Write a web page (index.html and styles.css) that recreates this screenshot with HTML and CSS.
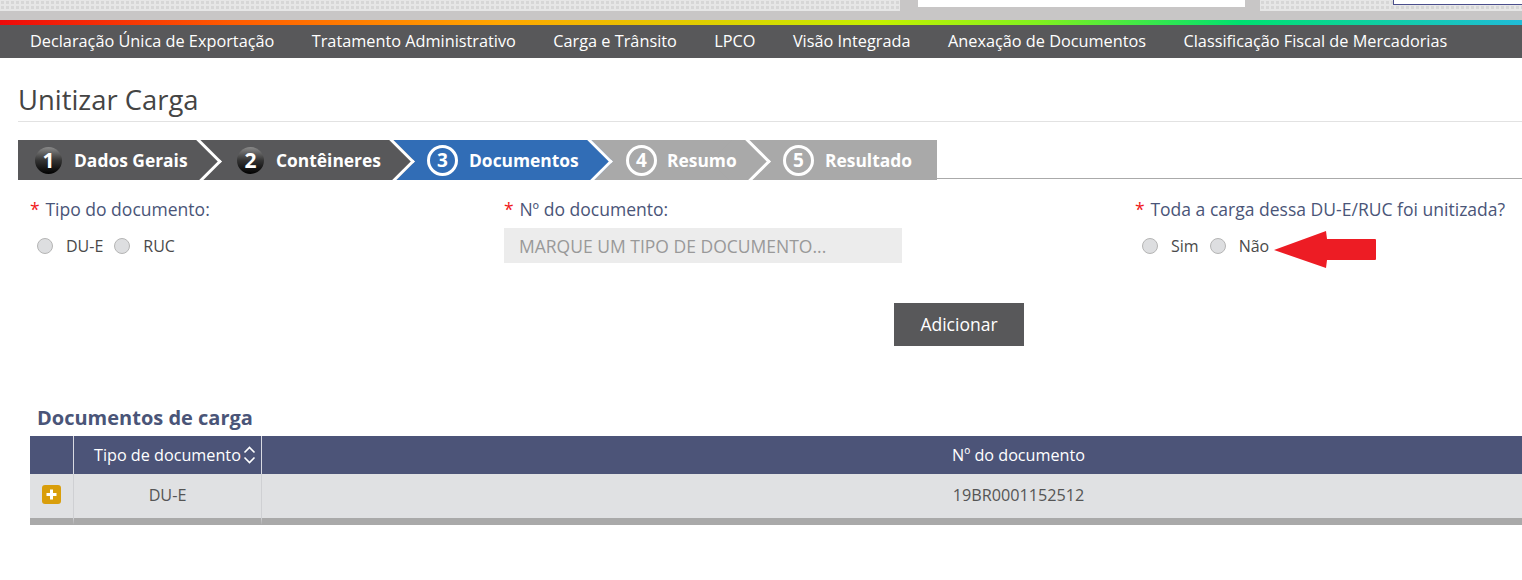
FILE: index.html
```html
<!DOCTYPE html>
<html lang="pt">
<head>
<meta charset="utf-8">
<title>Unitizar Carga</title>
<link rel="stylesheet" href="styles.css">
</head>
<body>
<header class="top">
  <div class="top-band">
    <div class="dots dots-left"></div>
    <div class="white-box"></div>
    <div class="dots dots-right"><div class="outlined"></div></div>
  </div>
  <div class="rainbow"></div>
  <nav class="menu">
    <a>Declaração Única de Exportação</a>
    <a>Tratamento Administrativo</a>
    <a>Carga e Trânsito</a>
    <a>LPCO</a>
    <a>Visão Integrada</a>
    <a>Anexação de Documentos</a>
    <a>Classificação Fiscal de Mercadorias</a>
  </nav>
</header>
<main class="page">
  <h1 class="title">Unitizar Carga</h1>
  <div class="steps">
    <div class="step step-done step-1"><span class="num num-dark">1</span><span class="lbl">Dados Gerais</span></div>
    <div class="step step-done step-2"><span class="num num-dark">2</span><span class="lbl">Contêineres</span></div>
    <div class="step step-active step-3"><span class="num">3</span><span class="lbl">Documentos</span></div>
    <div class="step step-todo step-4"><span class="num">4</span><span class="lbl">Resumo</span></div>
    <div class="step step-todo step-5"><span class="num">5</span><span class="lbl">Resultado</span></div>
    <div class="steps-line"></div>
  </div>
  <div class="form">
    <div class="field field-a">
      <div class="label"><span class="req">*</span>Tipo do documento:</div>
      <div class="radios">
        <span class="radio"></span><span class="opt">DU-E</span>
        <span class="radio"></span><span class="opt">RUC</span>
      </div>
    </div>
    <div class="field field-b">
      <div class="label"><span class="req">*</span>Nº do documento:</div>
      <div class="input">MARQUE UM TIPO DE DOCUMENTO...</div>
    </div>
    <div class="field field-c">
      <div class="label"><span class="req">*</span>Toda a carga dessa DU-E/RUC foi unitizada?</div>
      <div class="radios">
        <span class="radio"></span><span class="opt">Sim</span>
        <span class="radio"></span><span class="opt">Não</span>
      </div>
      <svg class="arrow" width="104" height="38" viewBox="0 0 104 38"><path d="M0 19 L52 0 L53 8 L101 8 Q102 8 102 9 L102 28 Q102 29 101 29 L53 29 L52 37 Z" fill="#ed1c24"/></svg>
    </div>
  </div>
  <div class="actions"><button class="btn" type="button">Adicionar</button></div>
  <h2 class="sub">Documentos de carga</h2>
  <table class="grid">
    <thead>
      <tr>
        <th class="c1"></th>
        <th class="c2"><span class="sort-wrap">Tipo de documento<svg class="sort" width="13" height="18" viewBox="0 0 13 18"><path d="M1.5 6.5 L6.5 1.5 L11.5 6.5 M1.5 11.5 L6.5 16.5 L11.5 11.5" fill="none" stroke="#fff" stroke-width="1.6"/></svg></span></th>
        <th class="c3">Nº do documento</th>
      </tr>
    </thead>
    <tbody>
      <tr>
        <td class="c1"><span class="plus"><svg width="19" height="19" viewBox="0 0 19 19"><path d="M9.5 4.5 V14.5 M4.5 9.5 H14.5" stroke="#fff" stroke-width="3"/></svg></span></td>
        <td class="c2">DU-E</td>
        <td class="c3">19BR0001152512</td>
      </tr>
    </tbody>
  </table>
</main>
</body>
</html>
```
FILE: styles.css
```css
* { box-sizing: border-box; }
html, body { margin: 0; padding: 0; }
body { width: 1522px; height: 580px; overflow: hidden; background: #fff; font-family: "Open Sans", sans-serif; color: #4a4a4a; }

.top-band { height: 20px; background: #c8c6c6; display: flex; align-items: flex-start; }
.dots { height: 11px; background-color: #e6e6e6; background-image: radial-gradient(#d6d6d6 1.5px, transparent 2px); background-size: 5px 5px; }
.dots-left { width: 900px; }
.white-box { width: 327px; height: 7px; margin-left: 18px; background: #fff; }
.dots-right { flex: 1; margin-left: 15px; position: relative; }
.outlined { position: absolute; left: 133px; right: 0; top: 0; height: 5px; border: 1px solid #4a4f8c; border-width: 0 0 1px 1px; background: #fff; }
.rainbow { height: 5px; background: linear-gradient(90deg, #ee0a0a 0, #ff5a00 230px, #ffa600 500px, #c4f000 880px, #80f020 1040px, #00e070 1240px, #20bcd8 1522px); }
.menu { height: 33px; background: #58585a; display: flex; align-items: center; padding: 0 0 2px 30px; gap: 37.4px; }
.menu a { color: #fff; font-size: 16.3px; white-space: nowrap; }

.page { padding-left: 18px; }
.title { margin: 0; height: 64px; padding-top: 22px; border-bottom: 1px solid #e2e2e2; font-size: 27.4px; font-weight: 400; line-height: 40px; color: #444; }

.steps { margin-top: 18px; height: 40px; display: flex; overflow: hidden; }
.step { height: 40px; flex: none; display: flex; align-items: center; position: relative; color: #fff; font-weight: 700; font-size: 17.4px; }
.step::after { content: ""; position: absolute; top: 0; right: -13.2px; width: 40px; height: 40px; transform: rotate(45deg); border-top: 3px solid #fff; border-right: 3px solid #fff; background: inherit; }
.step > span { position: relative; z-index: 1; }
.step-done { background: #58585a; }
.step-active { background: #316db6; }
.step-todo { background: #a9a9a9; }
.step-1 { width: 182px; padding-left: 17px; z-index: 5; }
.step-2 { width: 193px; padding-left: 37px; z-index: 4; }
.step-3 { width: 198px; padding-left: 34px; z-index: 3; }
.step-4 { width: 158px; padding-left: 35px; z-index: 2; }
.step-4 .num { margin-right: 10px; }
.step-5 { width: 188px; padding-left: 34px; z-index: 1; }
.step-5::after { display: none; }
.steps-line { flex: 1; height: 39px; border-bottom: 1px solid #aaa; }
.num { width: 31px; height: 31px; border-radius: 50%; border: 3px solid #fff; display: flex; align-items: center; justify-content: center; font-size: 19px; margin-right: 11px; flex: none; }
.num-dark { width: 27px; height: 27px; border: 0; background: linear-gradient(180deg, #8a8a8a 0%, #333 50%, #000 100%); margin-right: 12px; font-size: 21px; }

.form { display: flex; padding: 17px 0 0 12px; }
.field { flex: none; position: relative; }
.field-a { width: 474px; }
.field-b { width: 631px; }
.field-c { width: 400px; }
.label { height: 24px; font-size: 17.55px; line-height: 24px; color: #4a5578; white-space: nowrap; display: flex; }
.req { color: #f01a1a; width: 15.4px; }
.radios { margin-top: 7px; height: 35px; display: flex; align-items: center; padding-left: 7px; font-size: 16px; color: #4a4a4a; }
.radio { width: 16px; height: 16px; border-radius: 50%; background: #dddee0; border: 1px solid #b5b5b5; flex: none; margin-right: 13px; }
.opt { margin-right: 11px; }
.input { margin-top: 7px; width: 398px; height: 35px; background: #ececec; color: #999; font-size: 17.5px; line-height: 37px; padding-left: 15px; white-space: nowrap; }
.arrow { position: absolute; left: 139px; top: 34px; }

.actions { display: flex; padding: 40px 0 0 876px; }
.btn { width: 130px; height: 43px; border: 0; background: #58585a; color: #fff; font-family: inherit; font-size: 17.5px; padding: 0 0 2px; }

.sub { margin: 58px 0 0 19px; height: 32px; font-size: 20px; line-height: 28px; font-weight: 700; color: #4a5578; }

.grid { margin-left: 12px; width: 1492px; table-layout: fixed; border-collapse: separate; border-spacing: 0; }
.grid .c1 { width: 44px; }
.grid .c2 { width: 188px; }
.grid th { height: 38px; padding: 0; background: #4c5478; color: #fff; font-size: 16.2px; font-weight: 400; border-right: 1px solid #d8dae2; text-align: center; }
.grid th.c2 { text-align: left; padding-left: 20px; }
.grid th.c3, .grid td.c3 { padding-left: 253px; border-right: 0; }
.sort-wrap { display: inline-flex; align-items: center; gap: 2px; white-space: nowrap; }
.grid td { height: 51px; padding: 0 0 2px; background: #e0e1e3; background-clip: padding-box; color: #555; font-size: 16.2px; text-align: center; border-right: 1px solid #cfd0d3; border-bottom: 7px solid #a9a9a9; }
.plus { display: inline-flex; width: 19px; height: 19px; margin: 3px 0 0 -1px; background: #d99e0b; border-radius: 3px; }
.plus svg { display: block; }
```
